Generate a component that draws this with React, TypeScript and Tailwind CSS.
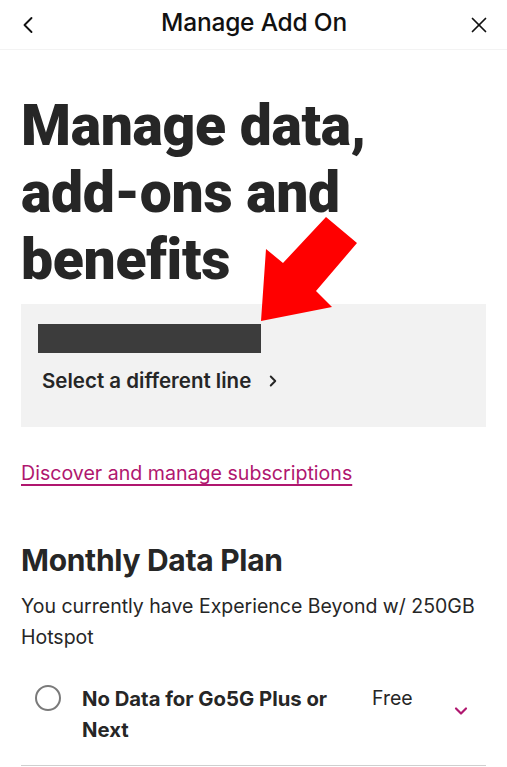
import { ChevronLeft, ChevronRight, ChevronDown, X } from "lucide-react";

export default function App() {
  return (
    <div
      className="relative w-[507px] h-[767px] overflow-hidden bg-white text-[#222]"
      style={{ fontFamily: "Inter, 'Liberation Sans', sans-serif" }}
    >
      {/* header */}
      <div className="flex items-center justify-between h-[50px] px-[14px] border-b border-[#f3f3f3]">
        <ChevronLeft className="w-[28px] h-[28px] text-[#111]" strokeWidth={1.6} />
        <div className="text-[24.5px] font-medium text-[#111] tracking-[-0.2px] pb-[4px]">
          Manage Add On
        </div>
        <X className="w-[26px] h-[26px] text-[#111] mr-[1px]" strokeWidth={1.6} />
      </div>

      <div className="px-[21px]">
        <h1
          className="mt-[42px] text-[57px] leading-[67px] font-black tracking-[-0.3px] text-[#262626]"
          style={{ fontFamily: "Roboto, 'Liberation Sans', sans-serif" }}
        >
          Manage data,
          <br />
          add-ons and
          <br />
          benefits
        </h1>

        <div className="mt-[11px] h-[123px] bg-[#f2f2f2] pt-[20px] px-[17px]">
          <div className="w-[223px] h-[29px] bg-[#3c3c3c]" />
          <div className="mt-[13px] flex items-center gap-[13px] pl-[4px]">
            <span className="text-[20.5px] font-semibold text-[#262626]">Select a different line</span>
            <ChevronRight className="w-[18px] h-[18px] text-[#262626]" strokeWidth={2.6} />
          </div>
        </div>

        <div className="mt-[32px] text-[19.6px] text-[#b0176f] underline underline-offset-[4px] decoration-[1.5px]">
          Discover and manage subscriptions
        </div>

        <h2 className="mt-[50px] text-[30px] font-bold text-[#262626] tracking-[-0.3px]">Monthly Data Plan</h2>
        <p className="mt-[8px] text-[19.5px] leading-[31px] text-[#262626]">
          You currently have Experience Beyond w/ 250GB Hotspot
        </p>

        <div className="mt-[30px] flex items-start border-b border-[#cfcfcf] pb-[20px]">
          <div className="w-[26px] h-[26px] rounded-full border-[2.5px] border-[#7a7a7a] ml-[14px] mt-[2px] shrink-0" />
          <div className="ml-[21px] w-[262px] text-[20.3px] leading-[31px] font-bold text-[#262626]">
            No Data for Go5G Plus or Next
          </div>
          <div className="ml-[28px] text-[19.5px] leading-[31px] text-[#262626]">Free</div>
          <ChevronDown className="ml-[38px] mt-[18px] w-[20px] h-[20px] text-[#b0176f]" strokeWidth={2.6} />
        </div>
      </div>

      {/* red annotation arrow */}
      <svg className="absolute left-0 top-0 pointer-events-none" width="507" height="767">
        <polygon
          points="261,321 266,249 283,263 326,217 357,243 316,291 332,307"
          fill="#ff0000"
        />
      </svg>
    </div>
  );
}
